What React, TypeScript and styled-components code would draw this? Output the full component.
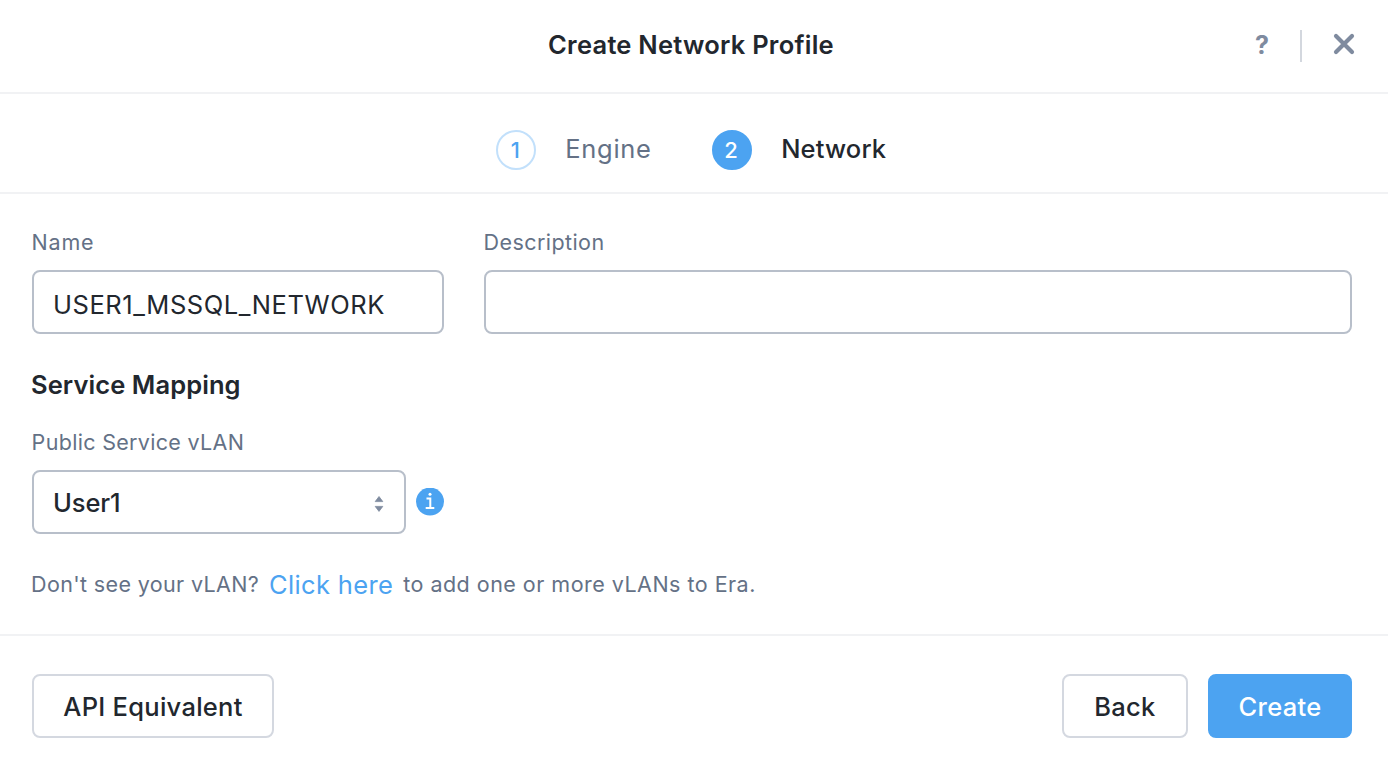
import React from "react";
import styled, { createGlobalStyle } from "styled-components";

const color = {
  ink: "#22272e",
  muted: "#647186",
  icon: "#7f8b9f",
  blue: "#4ca3f1",
  paleBlue: "#c2e0fb",
  field: "#b8bfca",
  outline: "#d4d8e0",
  rule: "#f1f2f4",
};

const GlobalStyle = createGlobalStyle`
  *, *::before, *::after { box-sizing: border-box; }
  body {
    margin: 0;
    background: #fff;
    color: ${color.ink};
    font-family: Inter, "Open Sans", sans-serif;
    font-size: 25.5px;
    line-height: 32px;
  }
`;

const Modal = styled.div`
  display: flex;
  flex-direction: column;
  width: 1388px;
  height: 772px;
  overflow: hidden;
  background: #fff;
`;

const Header = styled.header`
  display: grid;
  grid-template-columns: 1fr auto 1fr;
  align-items: center;
  height: 94px;
  padding: 0 33px 2px 27px;
  border-bottom: 2px solid ${color.rule};
`;

const Title = styled.h1`
  grid-column: 2;
  margin: 0;
  font-size: 25.5px;
  font-weight: 600;
  letter-spacing: 0.24px;
`;

const HeaderActions = styled.div`
  display: flex;
  align-items: center;
  justify-content: flex-end;
`;

const IconButton = styled.button`
  display: flex;
  align-items: center;
  justify-content: center;
  height: 32px;
  padding: 0;
  border: 0;
  background: none;
  color: ${color.icon};
  font: 700 25px/32px Inter, sans-serif;
`;

const CloseButton = styled(IconButton)`
  padding-bottom: 2px;
`;

const Divider = styled.span`
  width: 2px;
  height: 32px;
  margin: 2px 31px 0;
  background: #d3d7de;
`;

const Steps = styled.nav`
  display: flex;
  justify-content: center;
  gap: 60px;
  height: 100px;
  padding: 36px 6px 0 0;
  border-bottom: 2px solid ${color.rule};
`;

const Step = styled.div`
  display: flex;
  gap: 29.5px;
`;

const StepNumber = styled.span<{ $active?: boolean }>`
  display: flex;
  align-items: center;
  justify-content: center;
  width: 40px;
  height: 40px;
  padding-right: 1px;
  border: 2px solid ${(p) => (p.$active ? color.blue : color.paleBlue)};
  border-radius: 50%;
  background: ${(p) => (p.$active ? color.blue : "#fff")};
  color: ${(p) => (p.$active ? "#fff" : color.blue)};
  font-size: 22px;
  font-weight: 500;
`;

const StepLabel = styled.span<{ $active?: boolean }>`
  height: 38px;
  line-height: 38px;
  color: ${(p) => (p.$active ? color.ink : color.muted)};
  font-weight: ${(p) => (p.$active ? 460 : 400)};
  letter-spacing: ${(p) => (p.$active ? 0.15 : 0.7)}px;
`;

const Body = styled.main`
  display: flex;
  flex-direction: column;
  height: 440px;
  padding: 32px 36px 0 32px;
`;

const FieldRow = styled.div`
  display: grid;
  grid-template-columns: 412px 1fr;
  gap: 40px;
`;

const Field = styled.div`
  display: flex;
  flex-direction: column;
  gap: 12px;
`;

const Label = styled.label<{ $tracking: number }>`
  height: 32px;
  color: ${color.muted};
  font-size: 21.5px;
  letter-spacing: ${(p) => p.$tracking}px;
  text-indent: -0.4px;
`;

const Input = styled.input`
  width: 100%;
  height: 64px;
  padding: 4px 19px 0;
  border: 2px solid ${color.field};
  border-radius: 8px;
  outline: 0;
  background: #fff;
  color: ${color.ink};
  font: 400 25.5px/32px Inter, sans-serif;
  letter-spacing: 0.56px;
`;

const SectionTitle = styled.h2`
  margin: 35px 0 25px;
  font-size: 25.5px;
  font-weight: 600;
  line-height: 32px;
  letter-spacing: 0.08px;
  text-indent: -1px;
`;

const SelectLine = styled.div`
  display: flex;
  align-items: center;
  gap: 10px;
`;

const Select = styled.div`
  display: flex;
  align-items: center;
  justify-content: space-between;
  width: 374px;
  height: 64px;
  padding: 2px 20px 0 19px;
  border: 2px solid ${color.field};
  border-radius: 8px;
  font-weight: 460;
  letter-spacing: -0.1px;
`;

const Hint = styled.p`
  display: flex;
  align-items: center;
  height: 32px;
  margin: 34px 0 0;
  color: ${color.muted};
  font-size: 21.5px;
  letter-spacing: 0.36px;
  text-indent: -1px;
`;

const HintTail = styled.span`
  letter-spacing: 0.48px;
`;

const Link = styled.a`
  margin: 0 11px 0 10px;
  padding-top: 2px;
  color: ${color.blue};
  font-size: 25.5px;
  letter-spacing: 0.34px;
  text-indent: 0;
`;

const Footer = styled.footer`
  display: flex;
  justify-content: space-between;
  height: 138px;
  padding: 38px 36px 0 32px;
  border-top: 2px solid ${color.rule};
`;

const ButtonGroup = styled.div`
  display: flex;
  gap: 20px;
`;

const Button = styled.button<{ $width: number; $primary?: boolean }>`
  width: ${(p) => p.$width}px;
  height: 64px;
  padding: 2px 0 0;
  border: 2px solid ${(p) => (p.$primary ? color.blue : color.outline)};
  border-radius: 8px;
  background: ${(p) => (p.$primary ? color.blue : "#fff")};
  color: ${(p) => (p.$primary ? "#fff" : color.ink)};
  font: 450 25.5px/32px Inter, sans-serif;
  letter-spacing: 0.28px;
`;

const CloseIcon = () => (
  <svg width="22" height="22" viewBox="0 0 22 22" fill="none" stroke="currentColor" strokeWidth="4.2" strokeLinecap="round">
    <path d="M3 3 19 19M19 3 3 19" />
  </svg>
);

const SortIcon = () => (
  <svg width="10" height="18" viewBox="0 0 10 18" fill={color.icon} stroke={color.icon} strokeWidth="0.8" strokeLinejoin="round">
    <path d="M5 2.5 8.8 7.6H1.2ZM5 17.4 8.8 12.4H1.2Z" />
  </svg>
);

const InfoIcon = () => (
  <svg width="28" height="28" viewBox="0 0 28 28" fill="none">
    <circle cx="14" cy="13.6" r="14" fill={color.blue} />
    <circle cx="14" cy="6.3" r="1.5" fill="#fff" />
    <path d="M10.5 10.4H14.3V20M9.7 20H18.3" stroke="#fff" strokeWidth="2" />
  </svg>
);

export default function App() {
  return (
    <>
      <GlobalStyle />
      <Modal>
        <Header>
          <Title>Create Network Profile</Title>
          <HeaderActions>
            <IconButton aria-label="Help">?</IconButton>
            <Divider />
            <CloseButton aria-label="Close"><CloseIcon /></CloseButton>
          </HeaderActions>
        </Header>
        <Steps>
          <Step>
            <StepNumber>1</StepNumber>
            <StepLabel>Engine</StepLabel>
          </Step>
          <Step>
            <StepNumber $active>2</StepNumber>
            <StepLabel $active>Network</StepLabel>
          </Step>
        </Steps>
        <Body>
          <FieldRow>
            <Field>
              <Label htmlFor="name" $tracking={0.8}>Name</Label>
              <Input id="name" defaultValue="USER1_MSSQL_NETWORK" spellCheck={false} />
            </Field>
            <Field>
              <Label htmlFor="description" $tracking={0.42}>Description</Label>
              <Input id="description" />
            </Field>
          </FieldRow>
          <SectionTitle>Service Mapping</SectionTitle>
          <Field>
            <Label $tracking={0.31}>Public Service vLAN</Label>
            <SelectLine>
              <Select>
                User1
                <SortIcon />
              </Select>
              <InfoIcon />
            </SelectLine>
          </Field>
          <Hint>
            Don't see your vLAN?
            <Link>Click here</Link>
            <HintTail>to add one or more vLANs to Era.</HintTail>
          </Hint>
        </Body>
        <Footer>
          <Button $width={242}>API Equivalent</Button>
          <ButtonGroup>
            <Button $width={126}>Back</Button>
            <Button $width={144} $primary>Create</Button>
          </ButtonGroup>
        </Footer>
      </Modal>
    </>
  );
}
